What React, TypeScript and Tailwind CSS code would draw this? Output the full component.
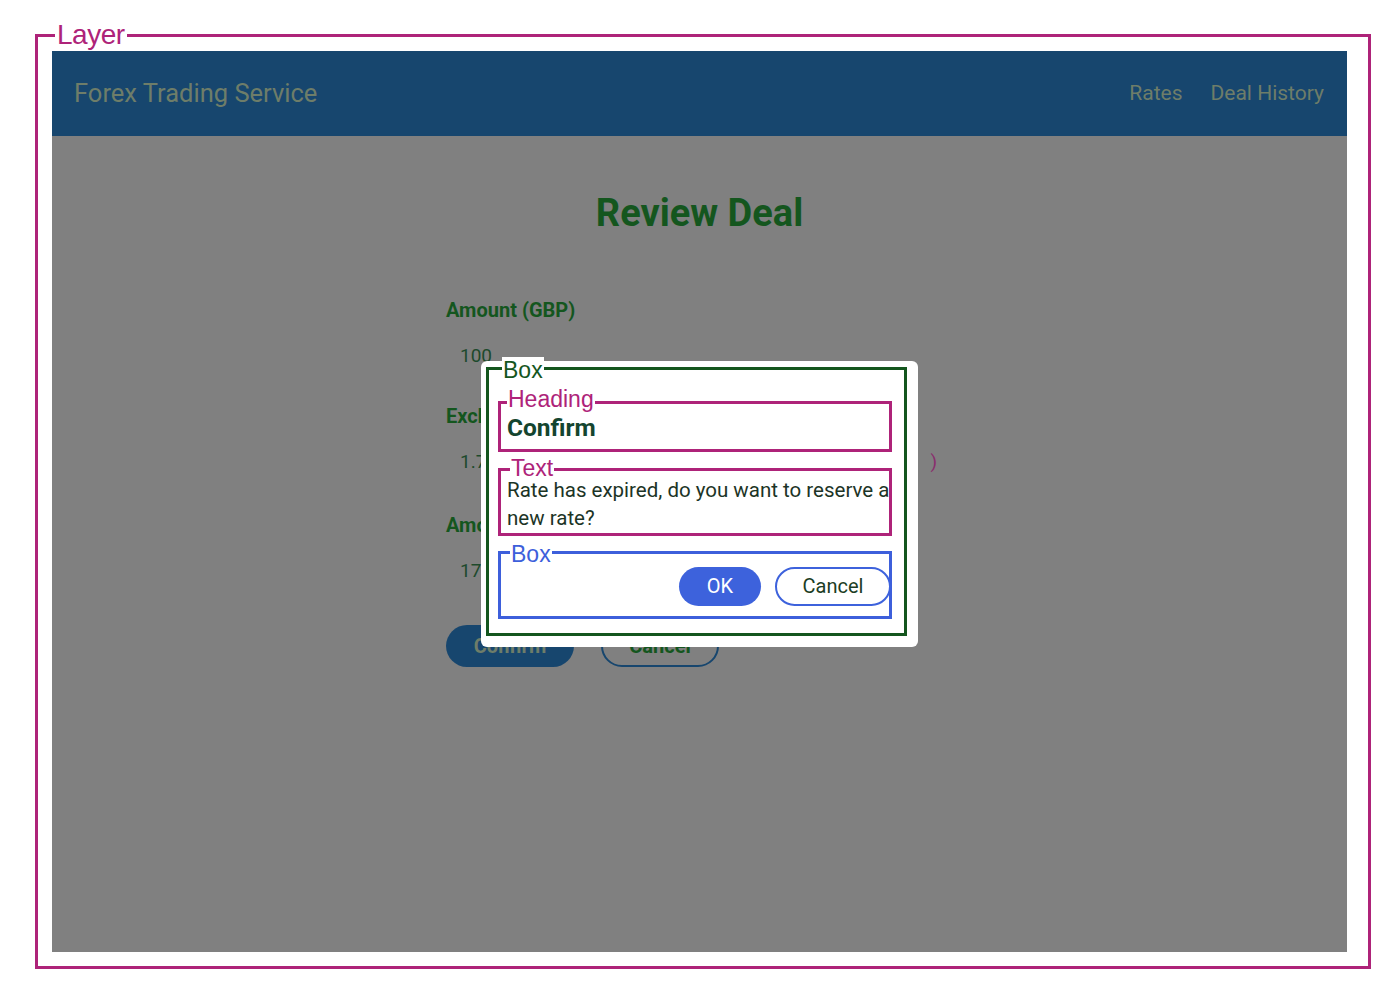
import React from 'react';

const magenta = 'border-[#ae2379]';

const Field: React.FC<{ label: string; value: React.ReactNode; className?: string }> = ({ label, value, className }) => (
  <div className={className}>
    <div className="h-[24px] leading-[24px] text-[20px] font-bold text-[#14561e]">{label}</div>
    <div className="mt-[22px] h-[24px] leading-[24px] pl-[14px] pr-[16px] text-[19px] text-[#1d4a2c] whitespace-nowrap flex justify-between">
      {value}
    </div>
  </div>
);

const App: React.FC = () => {
  return (
    <div className="w-[1400px] h-[996px] bg-white pt-[34px] pl-[35px] font-['Roboto',sans-serif]">
      {/* Layer frame */}
      <div className={`relative w-[1336px] h-[935px] border-[3px] ${magenta} pt-[14px] pl-[14px]`}>
        <span className="absolute left-[17px] top-[-18px] bg-white px-[2px] text-[28px] leading-[32px] tracking-[-0.5px] text-[#ae2379] font-['Liberation_Sans',sans-serif]">
          Layer
        </span>

        <div className="relative w-[1295px] h-[901px] flex flex-col">
          {/* Header */}
          <header className="h-[85px] shrink-0 bg-[#17466e] flex items-center justify-between pl-[22px] pr-[23px]">
            <div className="text-[25.5px] text-[#6e7d69]">Forex Trading Service</div>
            <nav className="flex items-center gap-[28px] text-[21px] text-[#6e7d69]">
              <span>Rates</span>
              <span>Deal History</span>
            </nav>
          </header>

          {/* Page */}
          <main className="flex-1 bg-[#808080] pt-[55px]">
            <h1 className="text-center text-[38px] leading-[44px] font-bold text-[#14561e]">Review Deal</h1>
            <div className="w-[507px] mx-auto mt-[63px]">
              <Field label="Amount (GBP)" value={<span>100</span>} className="mb-[36px]" />
              <Field
                label="Exchange Rate (GBP/USD)"
                value={
                  <>
                    <span>1.7325</span>
                    <span className="text-[#8a2f6e]">
                      (valid for 30 sec<span className="pl-[16px]">)</span>
                    </span>
                  </>
                }
                className="mb-[39px]"
              />
              <Field label="Amount (USD)" value={<span>173.25</span>} />
              <div className="mt-[42px] flex items-center gap-[27px]">
                <button className="h-[42px] w-[128px] rounded-full bg-[#17466e] text-[20px] font-bold text-[#6e7d69]">
                  Confirm
                </button>
                <button className="h-[42px] w-[118px] rounded-full border-2 border-[#17466e] text-[20px] font-bold text-[#14561e]">
                  Cancel
                </button>
              </div>
            </div>
          </main>

          {/* Dialog */}
          <div className="absolute left-[429px] top-[310px] w-[437px] h-[286px] rounded-[6px] bg-white pt-[6px] pl-[5px] pr-[11px] pb-[11px]">
            <div className="relative h-full border-[3px] border-[#14561e] pt-[31px] pl-[9px] pr-[12px] pb-[14px] flex flex-col">
              <span className="absolute left-[13px] top-[-13px] bg-white px-[1px] text-[23px] leading-[26px] text-[#14561e] font-['Liberation_Sans',sans-serif]">
                Box
              </span>

              {/* Heading */}
              <div className={`relative h-[51px] border-[3px] ${magenta} pl-[6px] flex items-center`}>
                <span className="absolute left-[6px] top-[-18px] bg-white px-[1px] text-[23px] leading-[26px] text-[#ae2379] font-['Liberation_Sans',sans-serif]">
                  Heading
                </span>
                <h2 className="text-[24.5px] leading-[30px] font-bold text-[#14452f] mt-[2px]">Confirm</h2>
              </div>

              {/* Text */}
              <div className={`relative mt-[16px] h-[68px] border-[3px] ${magenta} pl-[6px] pt-[5px]`}>
                <span className="absolute left-[9px] top-[-16px] bg-white px-[1px] text-[23px] leading-[26px] text-[#ae2379] font-['Liberation_Sans',sans-serif]">
                  Text
                </span>
                <p className="text-[20.5px] leading-[28px] text-[#1c3426] whitespace-nowrap">
                  Rate has expired, do you want to reserve a
                  <br />
                  new rate?
                </p>
              </div>

              {/* Buttons */}
              <div className="relative mt-[15px] h-[68px] border-[3px] border-[#3d5fdb] flex items-center justify-end gap-[14px] pt-[2px]">
                <span className="absolute left-[9px] top-[-13px] bg-white px-[1px] text-[23px] leading-[26px] text-[#3d5fdb] font-['Liberation_Sans',sans-serif]">
                  Box
                </span>
                <button className="h-[39px] w-[82px] rounded-full bg-[#3d62dc] text-[20px] text-white">OK</button>
                <button className="h-[39px] w-[116px] -mr-[2px] rounded-full border-2 border-[#3d62dc] bg-white text-[20px] text-[#1c3d24]">
                  Cancel
                </button>
              </div>
            </div>
          </div>
        </div>
      </div>
    </div>
  );
};

export default App;
